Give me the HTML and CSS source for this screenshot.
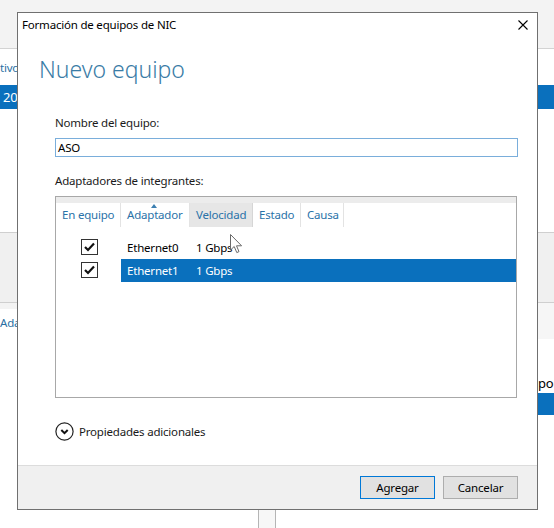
FILE: index.html
```html
<!DOCTYPE html>
<html lang="es">
<head>
    <meta charset="UTF-8">
    <title>Formación de equipos de NIC</title>
    <link rel="stylesheet" href="styles.css">
</head>
<body>
    <!-- ventana de fondo (Administrador del servidor) -->
    <div class="desk">
        <div class="bg-top"></div>
        <div class="bg-mid">
            <span class="bg-link">tivo</span>
            <div class="bg-sel"><span>201</span></div>
        </div>
        <div class="bg-gray"></div>
        <div class="bg-low">
            <div class="bg-left">
                <div class="bg-lhead"></div>
                <span class="bg-link">Ada</span>
                <div class="bg-scroll"></div>
            </div>
            <div class="bg-right">
                <div class="bg-rhead"></div>
                <span class="bg-text">po</span>
                <div class="bg-sel2"></div>
            </div>
        </div>
    </div>

    <div class="dialog">
        <div class="titlebar">
            <span>Formación de equipos de NIC</span>
            <svg class="close" width="10" height="10" viewBox="0 0 10 10">
                <path d="M0.5 0.5 L9.5 9.5 M9.5 0.5 L0.5 9.5" stroke="#000" stroke-width="1.1" fill="none"/>
            </svg>
        </div>
        <div class="main">
            <h1>Nuevo equipo</h1>
            <div class="form">
                <label class="lbl">Nombre del equipo:</label>
                <div class="input">ASO</div>
                <label class="lbl lbl2">Adaptadores de integrantes:</label>
                <div class="list">
                    <div class="list-strip"></div>
                    <div class="list-head">
                        <span class="col c1">En equipo</span>
                        <span class="col c2">Adaptador<i class="sort"></i></span>
                        <span class="col c3 hover">Velocidad</span>
                        <span class="col c4">Estado</span>
                        <span class="col c5">Causa</span>
                    </div>
                    <div class="list-body">
                        <div class="row">
                            <div class="chk-cell">
                                <svg class="chk" width="17" height="16" viewBox="0 0 17 16">
                                    <rect x="0.5" y="0.5" width="16" height="15" fill="#fff" stroke="#333"/>
                                    <path d="M4 8 L7 11 L13 4.5" stroke="#111" stroke-width="2.2" fill="none"/>
                                </svg>
                            </div>
                            <div class="cells">
                                <span class="cell c2">Ethernet0</span>
                                <span class="cell c3">1 Gbps</span>
                            </div>
                        </div>
                        <div class="row selected">
                            <div class="chk-cell">
                                <svg class="chk" width="17" height="16" viewBox="0 0 17 16">
                                    <rect x="0.5" y="0.5" width="16" height="15" fill="#fff" stroke="#333"/>
                                    <path d="M4 8 L7 11 L13 4.5" stroke="#111" stroke-width="2.2" fill="none"/>
                                </svg>
                            </div>
                            <div class="cells">
                                <span class="cell c2">Ethernet1</span>
                                <span class="cell c3">1 Gbps</span>
                            </div>
                        </div>
                    </div>
                </div>
                <div class="more">
                    <svg width="19" height="19" viewBox="0 0 19 19">
                        <circle cx="9.5" cy="9.5" r="8.6" stroke="#222" stroke-width="1.2" fill="none"/>
                        <path d="M6.3 8 L9.5 11.2 L12.7 8" stroke="#111" stroke-width="2" fill="none"/>
                    </svg>
                    <span>Propiedades adicionales</span>
                </div>
            </div>
        </div>
        <div class="footer">
            <a href="javascript:;" class="btn default">Agregar</a>
            <a href="javascript:;" class="btn">Cancelar</a>
        </div>
    </div>

    <svg class="cursor" width="13" height="20" viewBox="0 0 13 20">
        <path d="M0.5 0.5 L0.5 16 L4.2 12.5 L6.8 18.6 L9 17.6 L6.5 11.8 L11.6 11.8 Z" fill="#fff" stroke="#6a6a6a" stroke-width="1"/>
    </svg>
</body>
</html>
```

FILE: styles.css
```css
* {
    margin: 0;
    padding: 0;
    box-sizing: border-box;
}

html,
body {
    width: 554px;
    height: 528px;
    overflow: hidden;
}

body {
    position: relative;
    font-family: 'Noto Sans', 'Open Sans', sans-serif;
    font-size: 11.5px;
    letter-spacing: -0.2px;
    color: #000;
    background: #fff;
}

a {
    text-decoration: none;
    color: #000;
}

/* fondo */
.desk {
    height: 528px;
    display: flex;
    flex-direction: column;
}

.bg-top {
    height: 49px;
    background: #f3f3f3;
    border-bottom: 1px solid #d3d3d3;
}

.bg-mid {
    height: 184px;
    border-bottom: 1px solid #cfcfcf;
    padding-top: 11px;
}

.bg-link {
    display: block;
    color: #2a6fa3;
    line-height: 16px;
}

.bg-sel {
    margin-top: 9px;
    height: 24px;
    background: #0a70bd;
    color: #fff;
    line-height: 24px;
    padding-left: 3px;
    font-size: 13px;
}

.bg-gray {
    height: 70px;
    background: #f0f0f0;
    border-bottom: 1px solid #cfcfcf;
}

.bg-low {
    flex: 1;
    display: flex;
}

.bg-left {
    width: 277px;
    display: flex;
    flex-direction: column;
}

.bg-lhead {
    height: 6px;
    background: #f3f3f3;
}

.bg-left .bg-link {
    margin-top: 6px;
}

.bg-scroll {
    margin-top: auto;
    margin-left: 258px;
    width: 18px;
    height: 20px;
    border-left: 1px solid #b5b5b5;
    border-right: 1px solid #b5b5b5;
    background: #f7f7f7;
}

.bg-right {
    flex: 1;
    padding-left: 261px;
}

.bg-rhead {
    height: 36px;
    background: #f6f6f6;
    margin-left: -261px;
}

.bg-text {
    display: block;
    margin-top: 36px;
    line-height: 16px;
    font-size: 13px;
}

.bg-sel2 {
    margin-top: 2px;
    height: 22px;
    background: #0a70bd;
}

/* dialogo */
.dialog {
    position: absolute;
    left: 17px;
    top: 12px;
    width: 521px;
    height: 498px;
    border: 1px solid #707070;
    background: #fff;
    display: flex;
    flex-direction: column;
}

.titlebar {
    height: 24px;
    display: flex;
    align-items: center;
    justify-content: space-between;
    padding: 0 9px 0 4px;
}

.titlebar span {
    line-height: 16px;
}

.main {
    padding: 0 19px 0 21px;
}

h1 {
    margin-top: 17px;
    font-size: 23px;
    line-height: 30px;
    font-weight: 300;
    letter-spacing: 0;
    color: #3a7ca6;
}

.form {
    padding-left: 16px;
}

.lbl {
    display: block;
    margin-top: 31px;
    line-height: 16px;
    color: #1a1a1a;
}

.lbl2 {
    margin-top: 16px;
}

.input {
    margin-top: 7px;
    height: 19px;
    border: 1px solid #7aaedb;
    line-height: 17px;
    padding-left: 2px;
}

.list {
    margin-top: 7px;
    height: 202px;
    margin-right: 1px;
    border: 1px solid #a8a8a8;
}

.list-strip {
    height: 6px;
    background: #ececec;
}

.list-head {
    display: flex;
    height: 24px;
}

.col {
    position: relative;
    line-height: 23px;
    padding-left: 6px;
    color: #2a72a8;
    border-right: 1px solid #e3e3e3;
}

.c1 {
    width: 65px;
}

.c2 {
    width: 69px;
}

.c3 {
    width: 63px;
}

.c4 {
    width: 48px;
}

.c5 {
    width: 43px;
}

.col.hover {
    background: #e6e6e6;
    border-right-color: #d6d6d6;
}

.sort {
    position: absolute;
    left: 30px;
    top: 1px;
    width: 0;
    height: 0;
    border-left: 3.5px solid transparent;
    border-right: 3.5px solid transparent;
    border-bottom: 4px solid #3d7fb1;
}

.list-body {
    padding-top: 9px;
}

.row {
    display: flex;
    height: 23px;
}

.chk-cell {
    width: 65px;
    padding: 3px 0 0 25px;
}

.chk {
    display: block;
}

.cells {
    flex: 1;
    display: flex;
    line-height: 23px;
}

.cell {
    padding-left: 6px;
}

.cell.c2 {
    width: 69px;
}

.row.selected .cells {
    background: #0a70bd;
    color: #fff;
}

.more {
    margin-top: 24px;
    display: flex;
    align-items: center;
    gap: 5px;
    color: #1a1a1a;
}

.footer {
    margin-top: auto;
    height: 44px;
    background: #f0f0f0;
    border-top: 1px solid #dcdcdc;
    display: flex;
    justify-content: flex-end;
    gap: 8px;
    padding: 10px 19px 0 0;
}

.btn {
    width: 75px;
    height: 23px;
    border: 1px solid #adadad;
    background: #e1e1e1;
    text-align: center;
    line-height: 21px;
}

.btn.default {
    border-color: #0078d7;
}

.cursor {
    position: absolute;
    left: 230px;
    top: 234px;
}
```
